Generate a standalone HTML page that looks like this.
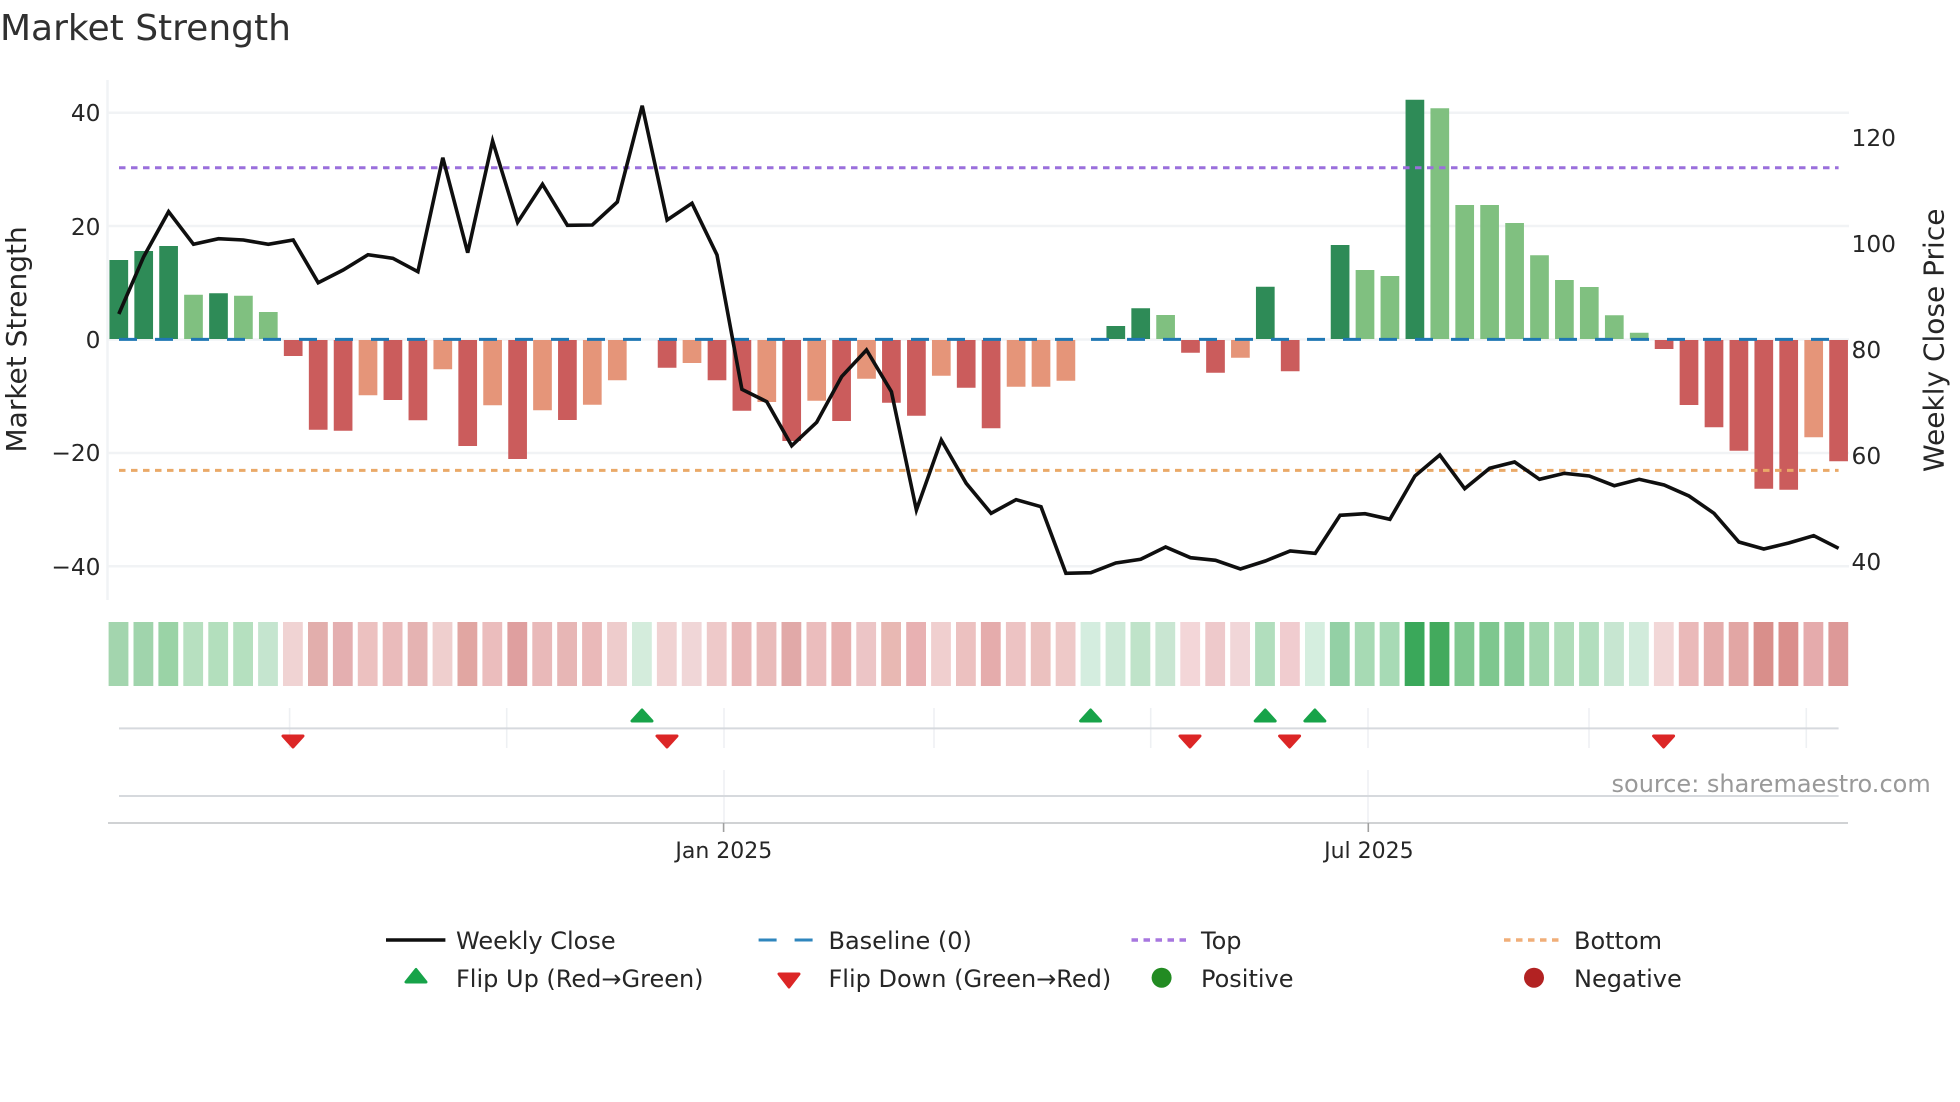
<!DOCTYPE html>
<html lang="en">
<head>
<meta charset="utf-8">
<title>Market Strength</title>
<style>
html,body{margin:0;padding:0;background:#fff;width:1960px;height:1102px;overflow:hidden}
svg{display:block;filter:blur(.35px)}
text{font-family:"DejaVu Sans","Liberation Sans",sans-serif;fill:#262626}
.t{font-size:23.3px}
.l{font-size:24px}
</style>
</head>
<body>
<svg width="1960" height="1102" viewBox="0 0 1960 1102" xmlns="http://www.w3.org/2000/svg">
<rect width="1960" height="1102" fill="#fff"/>
<text x="0" y="40" font-size="36" style="fill:#303030">Market Strength</text>

<!-- grid -->
<g stroke="#f1f3f5" stroke-width="2.5" fill="none">
<path d="M107.5 80V600"/>
<path d="M107 112.8H1849M107 226H1849M107 339.5H1849M107 453H1849M107 566.3H1849"/>
</g>

<!-- bars -->
<g fill="none" stroke-width="18.7">
<path stroke="#2e8b57" d="M118.8 339V260M143.7 339V251M168.6 339V246M218.5 339V293.3M1115.8 339V326M1140.7 339V308.3M1265.3 339V286.7M1340.1 339V245M1414.9 339V99.7"/>
<path stroke="#80c080" d="M193.5 339V294.7M243.4 339V295.7M268.3 339V312M1165.6 339V315M1365 339V270M1389.9 339V276M1439.8 339V108.3M1464.7 339V205M1489.6 339V205M1514.6 339V223M1539.5 339V255.3M1564.4 339V280M1589.3 339V287M1614.3 339V315.3M1639.2 339V332.7"/>
<path stroke="#cb5c5c" d="M293.2 340V356M318.2 340V429.7M343.1 340V430.7M392.9 340V400M417.9 340V420.3M467.7 340V446M517.6 340V459M567.4 340V420M667.1 340V367.7M717 340V380.3M741.9 340V410.7M791.7 340V441M841.6 340V421M891.4 340V402.7M916.4 340V415.7M966.2 340V387.7M991.1 340V428.3M1190.5 340V352.7M1215.5 340V372.7M1290.2 340V371.3M1664.1 340V349M1689 340V405M1714 340V427.3M1738.9 340V450.7M1763.8 340V488.7M1788.7 340V489.7M1838.6 340V461.3"/>
<path stroke="#e59579" d="M368 340V395.3M442.8 340V369.3M492.6 340V405.3M542.5 340V410.3M592.3 340V404.7M617.3 340V380.3M692 340V363M766.8 340V402M816.7 340V400.7M866.5 340V378.7M941.3 340V375.7M1016.1 340V386.7M1041 340V386.7M1065.9 340V380.7M1240.4 340V357.7M1813.7 340V437.3"/>
</g>

<!-- heat strip -->
<g fill="none" stroke-width="19.8">
<path stroke="#a3d5ae" d="M118.5 622V686"/><path stroke="#a0d4ac" d="M143.4 622V686"/><path stroke="#9ad3a6" d="M168.3 622V686"/><path stroke="#b7e0c0" d="M193.2 622V686"/><path stroke="#b3dfbd" d="M218.2 622V686"/><path stroke="#b5e0bf" d="M243.1 622V686"/><path stroke="#c5e5cf" d="M268 622V686"/><path stroke="#f0d3d3" d="M292.9 622V686"/><path stroke="#e2aeac" d="M317.9 622V686"/><path stroke="#e4afb0" d="M342.8 622V686"/>
<path stroke="#ecc1c0" d="M367.7 622V686"/><path stroke="#eabbbb" d="M392.6 622V686"/><path stroke="#e5b3b2" d="M417.6 622V686"/><path stroke="#efcfce" d="M442.5 622V686"/><path stroke="#e1a6a2" d="M467.4 622V686"/><path stroke="#ebbdbd" d="M492.3 622V686"/><path stroke="#df9f9f" d="M517.3 622V686"/><path stroke="#e9b9b9" d="M542.2 622V686"/><path stroke="#e7b6b5" d="M567.1 622V686"/><path stroke="#eab9b9" d="M592 622V686"/>
<path stroke="#eecccc" d="M617 622V686"/><path stroke="#d4ecdc" d="M641.9 622V686"/><path stroke="#f0d2d2" d="M666.8 622V686"/><path stroke="#f0d6d7" d="M691.7 622V686"/><path stroke="#eec9c9" d="M716.7 622V686"/><path stroke="#e9b7b7" d="M741.6 622V686"/><path stroke="#e9bbba" d="M766.5 622V686"/><path stroke="#e1a9a8" d="M791.4 622V686"/><path stroke="#ebbdbd" d="M816.4 622V686"/><path stroke="#e7b0af" d="M841.3 622V686"/>
<path stroke="#ecc5c6" d="M866.2 622V686"/><path stroke="#e8b8b3" d="M891.1 622V686"/><path stroke="#e8b1b2" d="M916.1 622V686"/><path stroke="#f0cfcf" d="M941 622V686"/><path stroke="#ecc1c0" d="M965.9 622V686"/><path stroke="#e5acac" d="M990.8 622V686"/><path stroke="#edc3c3" d="M1015.8 622V686"/><path stroke="#ebc1bf" d="M1040.7 622V686"/><path stroke="#eec9c8" d="M1065.6 622V686"/><path stroke="#d4eddf" d="M1090.5 622V686"/>
<path stroke="#cde9d7" d="M1115.5 622V686"/><path stroke="#bfe3c9" d="M1140.4 622V686"/><path stroke="#c9e6d2" d="M1165.3 622V686"/><path stroke="#f3d6d8" d="M1190.2 622V686"/><path stroke="#eec9cb" d="M1215.2 622V686"/><path stroke="#f1d6d8" d="M1240.1 622V686"/><path stroke="#b1debd" d="M1265 622V686"/><path stroke="#f0cccf" d="M1289.9 622V686"/><path stroke="#d5eedf" d="M1314.9 622V686"/><path stroke="#93d0a5" d="M1339.8 622V686"/>
<path stroke="#a7dab4" d="M1364.7 622V686"/><path stroke="#a7dab5" d="M1389.6 622V686"/><path stroke="#3aa85a" d="M1414.6 622V686"/><path stroke="#43aa5d" d="M1439.5 622V686"/><path stroke="#80c890" d="M1464.4 622V686"/><path stroke="#7ec78f" d="M1489.3 622V686"/><path stroke="#88cb98" d="M1514.3 622V686"/><path stroke="#a0d6ac" d="M1539.2 622V686"/><path stroke="#b0ddba" d="M1564.1 622V686"/><path stroke="#b2debe" d="M1589 622V686"/>
<path stroke="#c7e6d1" d="M1614 622V686"/><path stroke="#d1ebdb" d="M1638.9 622V686"/><path stroke="#f2d7d7" d="M1663.8 622V686"/><path stroke="#eab9b9" d="M1688.7 622V686"/><path stroke="#e5adac" d="M1713.7 622V686"/><path stroke="#e2a6a4" d="M1738.6 622V686"/><path stroke="#d98f8b" d="M1763.5 622V686"/><path stroke="#da8f8c" d="M1788.4 622V686"/><path stroke="#e5abac" d="M1813.4 622V686"/><path stroke="#dd9998" d="M1838.3 622V686"/>
</g>

<!-- reference lines -->
<path d="M119 339.4H1838.6" stroke="#1f77b4" stroke-width="3" stroke-dasharray="18 18" fill="none"/>
<path d="M119 167.7H1838.6" stroke="#9a6fdc" stroke-width="3" stroke-dasharray="6.5 5.5" fill="none"/>
<path d="M119 470.4H1838.6" stroke="#eaa968" stroke-width="3" stroke-dasharray="6.5 5.5" fill="none"/>

<!-- weekly close -->
<polyline fill="none" stroke="#0f0f0f" stroke-width="3.6" stroke-linejoin="miter" points="118.8,314 143.7,256.7 168.6,211.7 193.5,244.3 218.5,238.7 243.4,240 268.3,244.3 293.2,240 318.2,282.7 343.1,270 368,254.7 392.9,258.3 417.9,271.7 442.8,157.7 467.7,252.7 492.6,141 517.6,222.3 542.5,184.3 567.4,225.3 592.3,225 617.3,202 642.2,105.7 667.1,220 692,203.3 717,255 741.9,389.3 766.8,401.7 791.7,445.7 816.7,422.3 841.6,376.7 866.5,350 891.4,391.7 916.4,510 941.3,440 966.2,483.3 991.1,513.3 1016.1,499.7 1041,506.7 1065.9,573.3 1090.8,572.7 1115.8,563 1140.7,559.3 1165.6,547 1190.5,557.7 1215.5,560.3 1240.4,569 1265.3,561 1290.2,551 1315.2,553.3 1340.1,515.3 1365,513.7 1389.9,519.3 1414.9,476 1439.8,455 1464.7,488.7 1489.6,468.3 1514.6,462 1539.5,479.3 1564.4,473.3 1589.3,476 1614.3,485.7 1639.2,479.3 1664.1,485 1689,496 1714,513.3 1738.9,542 1763.8,549 1788.7,543 1813.7,535.7 1838.6,548.3"/>

<!-- flip rows -->
<path d="M289.6 708V748M506.7 708V748M724 708V748M934 708V748M1150.7 708V748M1368 708V748M1589 708V748M1806.3 708V748M724 770V823M1368 770V823" stroke="#eef0f3" stroke-width="1.6" fill="none"/>
<path d="M119 728.4H1838.6" stroke="#d6d9de" stroke-width="2" fill="none"/>
<path d="M119 796H1838.6" stroke="#d6d9dd" stroke-width="2" fill="none"/>
<path d="M108 823H1848" stroke="#d0d2d4" stroke-width="2" fill="none"/>
<path d="M723.6 823V832M1368.3 823V832" stroke="#a0a0a0" stroke-width="1.6" fill="none"/>

<g fill="#17a349" stroke="#17a349" stroke-width="3" stroke-linejoin="round">
<path d="M642 710 632 721H652z"/>
<path d="M1090.6 710 1080.6 721H1100.6z"/>
<path d="M1265.2 710 1255.2 721H1275.2z"/>
<path d="M1314.9 710 1304.9 721H1324.9z"/>
<path d="M416 969.5 406 982H426z"/>
</g>
<g fill="#dc2626" stroke="#dc2626" stroke-width="3" stroke-linejoin="round">
<path d="M293 747 283 736H303z"/>
<path d="M667 747 657 736H677z"/>
<path d="M1190 747 1180 736H1200z"/>
<path d="M1289.6 747 1279.6 736H1299.6z"/>
<path d="M1663.6 747 1653.6 736H1673.6z"/>
<path d="M789 987 779 974H799z"/>
</g>

<!-- y axis ticks -->
<g class="t" text-anchor="end">
<text x="100.5" y="121">40</text>
<text x="100.5" y="235">20</text>
<text x="100.5" y="348">0</text>
<text x="100.5" y="461">−20</text>
<text x="100.5" y="575">−40</text>
</g>
<g class="t">
<text x="1851.5" y="146">120</text>
<text x="1851.5" y="252">100</text>
<text x="1851.5" y="358">80</text>
<text x="1851.5" y="464">60</text>
<text x="1851.5" y="570">40</text>
</g>
<text transform="translate(26 452.5) rotate(-90)" font-size="28">Market Strength</text>
<text transform="translate(1943.5 472) rotate(-90)" font-size="28">Weekly Close Price</text>

<!-- x axis -->
<text x="723.8" y="858" text-anchor="middle" style="font-size:22px">Jan 2025</text>
<text x="1368.9" y="858" text-anchor="middle" style="font-size:22px">Jul 2025</text>

<text x="1611.5" y="792" font-size="24" style="fill:#999">source: sharemaestro.com</text>

<!-- legend -->
<path d="M386 940H445.4" stroke="#0f0f0f" stroke-width="3.6" fill="none"/>
<path d="M758.6 940H813" stroke="#2f86bd" stroke-width="3" stroke-dasharray="18 18" fill="none"/>
<path d="M1131.5 940H1186" stroke="#a777df" stroke-width="3.4" stroke-dasharray="6.5 5.5" fill="none"/>
<path d="M1504 940H1558.5" stroke="#f0ae78" stroke-width="3.4" stroke-dasharray="6.5 5.5" fill="none"/>
<circle cx="1161.6" cy="977.7" r="10" fill="#228b22"/>
<circle cx="1534" cy="977.7" r="10" fill="#b22222"/>
<g class="l">
<text x="456" y="949">Weekly Close</text>
<text x="828.5" y="949">Baseline (0)</text>
<text x="1201" y="949">Top</text>
<text x="1574" y="949">Bottom</text>
<text x="456" y="987">Flip Up (Red→Green)</text>
<text x="828.5" y="987">Flip Down (Green→Red)</text>
<text x="1201" y="987">Positive</text>
<text x="1574" y="987">Negative</text>
</g>
</svg>
</body>
</html>
